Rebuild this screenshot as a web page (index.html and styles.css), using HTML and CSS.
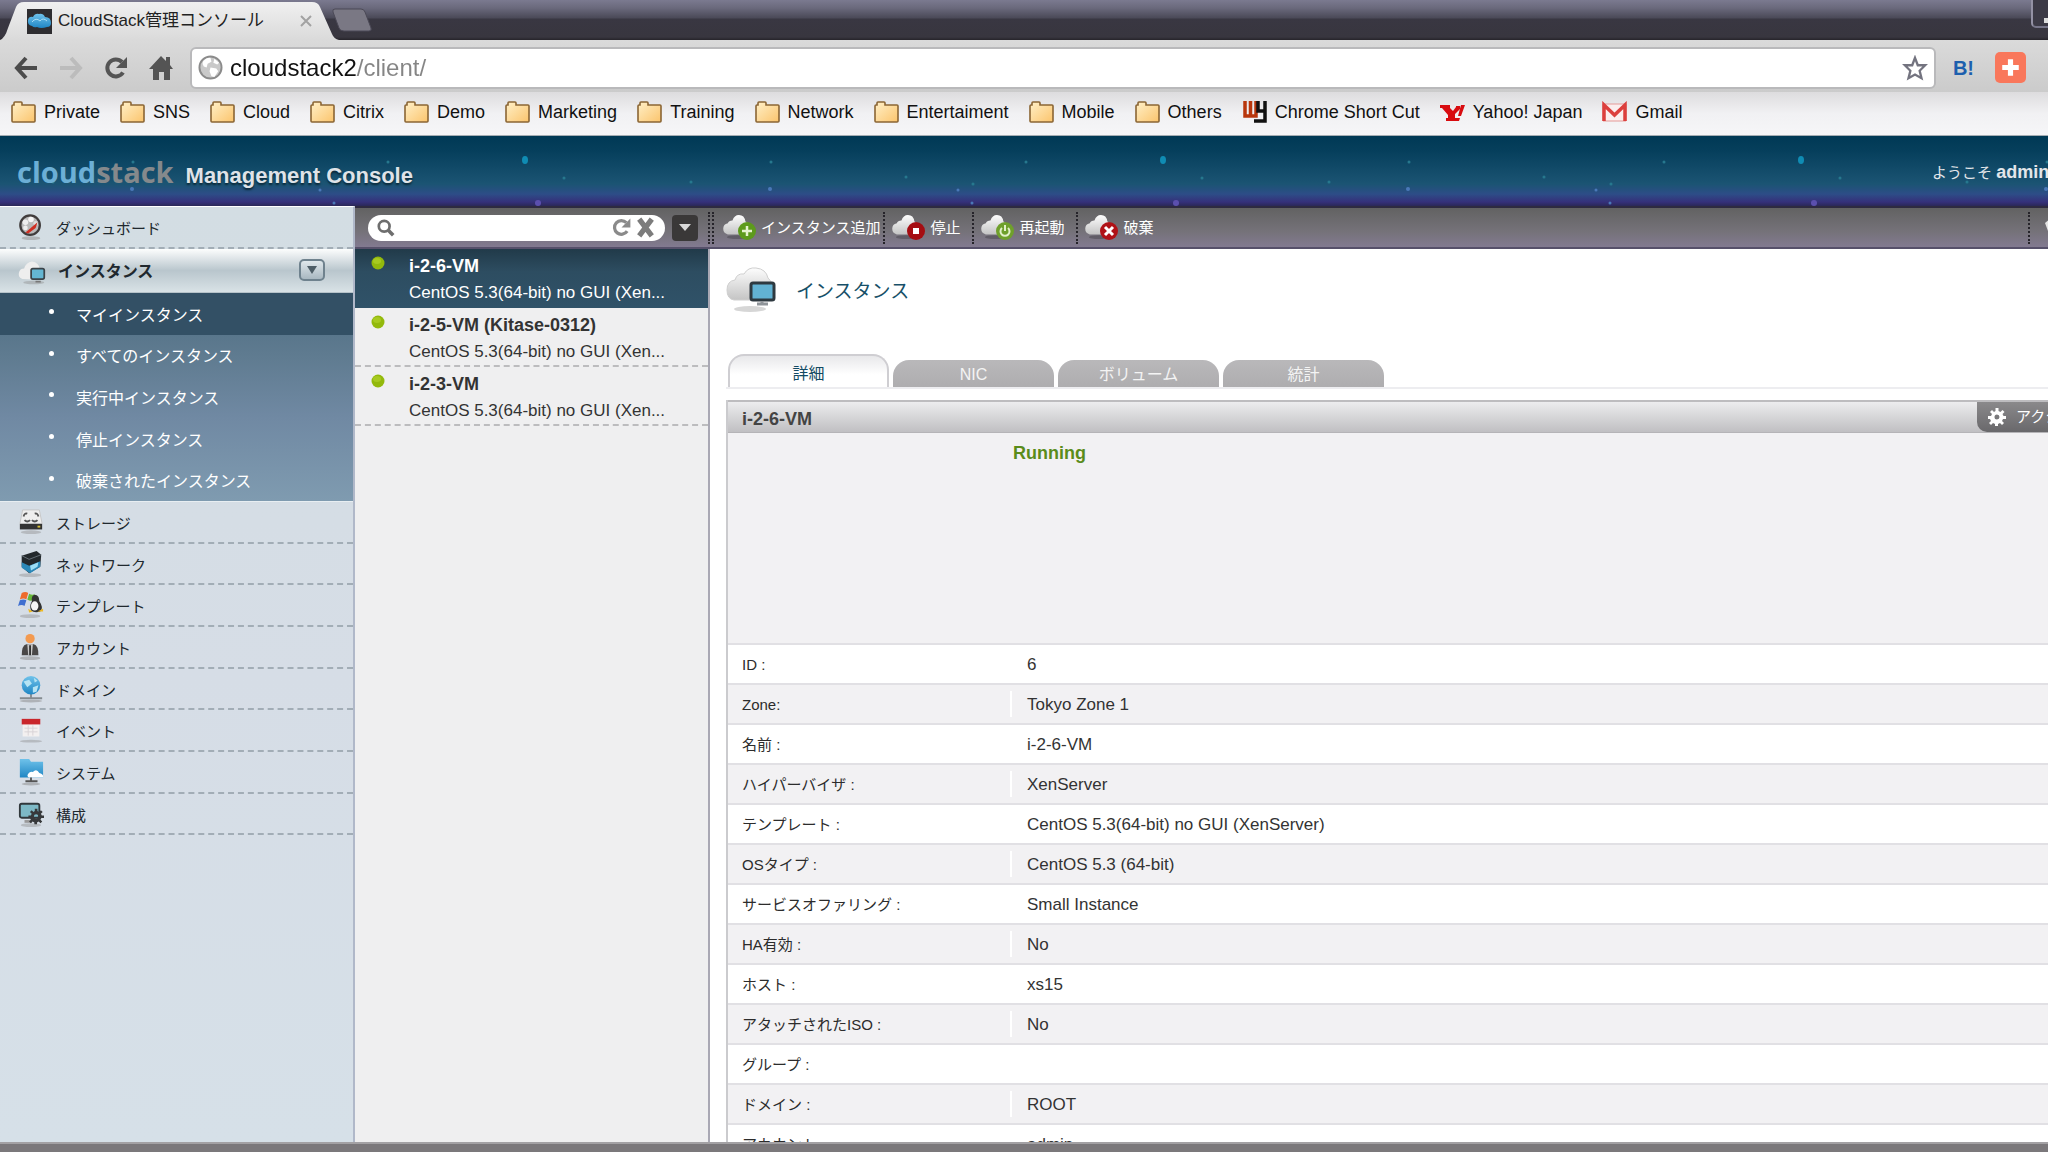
FILE: index.html
```html
<!DOCTYPE html>
<html lang="ja">
<head>
<meta charset="utf-8">
<title>CloudStack管理コンソール</title>
<link rel="stylesheet" href="styles.css">
</head>
<body>
<svg class="defs" aria-hidden="true">
  <defs>
    <linearGradient id="g-folder" x1="0" y1="0" x2="1" y2="1"><stop offset="0" stop-color="#fff0c8"/><stop offset="1" stop-color="#fbc46c"/></linearGradient>
    <linearGradient id="g-cloud" x1="0" y1="0" x2="0" y2="1"><stop offset="0" stop-color="#fdfdfd"/><stop offset="1" stop-color="#c4c4c4"/></linearGradient>
    <linearGradient id="g-blue" x1="0" y1="0" x2="0" y2="1"><stop offset="0" stop-color="#6fc2ea"/><stop offset="1" stop-color="#1f86c4"/></linearGradient>
    <linearGradient id="g-tab" x1="0" y1="0" x2="0" y2="1"><stop offset="0" stop-color="#f0f0f0"/><stop offset="1" stop-color="#dadada"/></linearGradient>
    <symbol id="i-folder" viewBox="0 0 25 22"><path d="M3 4V2q0-1 1-1h6q1 0 1 1v2h12q1 0 1 1v15q0 1-1 1H2q-1 0-1-1V5q0-1 1-1z" fill="url(#g-folder)" stroke="#8a6534" stroke-width="1.6"/></symbol>
    <symbol id="i-cloud" viewBox="0 0 32 26"><ellipse cx="15" cy="24" rx="11" ry="2" fill="#000" opacity=".2"/><path d="M5 21q-5-1-5-6t5-6q1-3 5-3 2-6 7-6 6 0 7 7 5 2 5 7 0 6-6 7z" fill="url(#g-cloud)"/></symbol>
    <symbol id="i-dot" viewBox="0 0 14 14"><circle cx="7" cy="7" r="6.500" fill="#93b90c"/><ellipse cx="6" cy="5" rx="4" ry="3" fill="#b4d52f" opacity=".6"/></symbol>
    <symbol id="i-gear" viewBox="0 0 18 18"><path d="M7.500 0h3v3l2 1 2-2 2 2-2 2 1 2H18v3h-3l-1 2 2 2-2 2-2-2-2 1v3h-3v-3l-2-1-2 2-2-2 2-2-1-2H0v-3h3l1-2-2-2 2-2 2 2 1.500-1zM9 6.500a2.500 2.500 0 1 0 0 5 2.500 2.500 0 0 0 0-5z" fill="currentColor" fill-rule="evenodd"/></symbol>
    <symbol id="i-reload" viewBox="0 0 26 26"><path d="M20 17.500A8.500 8.500 0 1 1 19 7" fill="none" stroke="currentColor" stroke-width="4"/><path d="M24 2v11H13z" fill="currentColor"/></symbol>
  </defs>
</svg>

<header class="browser">
  <div class="tabstrip">
    <div class="tab">
      <svg class="tab-shape" viewBox="0 0 340 40" preserveAspectRatio="none" aria-hidden="true"><path d="M0 40Q5 38 8 28L16 7Q18 2 24 2H312Q318 2 320 7L332 34Q334 39 339 40z" fill="url(#g-tab)"/></svg>
      <svg class="favicon" viewBox="0 0 25 25" aria-hidden="true"><path d="M0 0h25v25H0z" fill="#2e2d30"/><path d="M5 17Q0 16 1 11 2 7 6 8q2-4 6-3 4-1 6 3 6 0 6 6 0 4-4 4-6 2-10 0-3 1-5-1z" fill="url(#g-blue)"/><path d="M5 13q4-5 8-1 3-4 7 0" fill="none" stroke="#a9def5" stroke-width="1"/></svg>
      <span class="tab-title">CloudStack管理コンソール</span>
      <button class="tab-close" aria-label="閉じる"><svg viewBox="0 0 12 12"><path d="M1 1l10 10M11 1L1 11" stroke="#a2a2a2" stroke-width="2"/></svg></button>
    </div>
    <button class="new-tab" aria-label="新しいタブ"><svg viewBox="0 0 40 24"><path d="M3 1h26q3 0 4 3l6 16q1 3-2 3H12q-4 0-5-3L1 4q-1-3 2-3z" fill="#7a7884" stroke="#4b4956"/></svg></button>
    <button class="win-min" aria-label="最小化"><span></span></button>
  </div>

  <div class="navbar">
    <button class="nav-btn" aria-label="戻る"><svg viewBox="0 0 26 26"><path d="M24 13H5M13 3L4 13l9 10" fill="none" stroke="#4c4c4c" stroke-width="4"/></svg></button>
    <button class="nav-btn" aria-label="進む"><svg viewBox="0 0 26 26"><path d="M2 13h19M13 3l9 10-9 10" fill="none" stroke="#bcbcbc" stroke-width="4"/></svg></button>
    <button class="nav-btn" aria-label="再読み込み"><svg><use href="#i-reload"/></svg></button>
    <button class="nav-btn" aria-label="ホーム"><svg viewBox="0 0 26 26"><path d="M13 1l5 5V2h4v8l3 4h-3v11h-6v-8h-5v8H5V14H1z" fill="#545454"/></svg></button>
    <div class="omnibox">
      <svg class="globe" viewBox="0 0 26 26" aria-hidden="true"><circle cx="13" cy="13" r="11.500" fill="#c9c9c9" stroke="#8b8b8b" stroke-width="2"/><path d="M5 7q4-5 8-4l1 4-4 2-1 4-3-1q-2-2-1-5zM13 13l6 1 2 3-4 6-3-1-2-5zM17 4l5 4-2 2-4-2z" fill="#fff"/></svg>
      <input class="url" type="text" aria-label="アドレス" value="cloudstack2/client/">
      <button class="nav-btn" aria-label="ブックマーク"><svg viewBox="0 0 28 28"><path d="M14 3l3 8h8l-6 6 2 8-7-4-7 4 2-8-6-6h8z" fill="#fff" stroke="#73737f" stroke-width="2.500"/></svg></button>
    </div>
    <button class="ext-b" aria-label="はてなブックマーク">B!</button>
    <button class="ext-plus" aria-label="追加"><svg viewBox="0 0 30 30"><path d="M15 7v16M7 15h16" stroke="#fff" stroke-width="5"/></svg></button>
  </div>

  <nav class="bookmarks">
    <a href="#"><svg><use href="#i-folder"/></svg>Private</a>
    <a href="#"><svg><use href="#i-folder"/></svg>SNS</a>
    <a href="#"><svg><use href="#i-folder"/></svg>Cloud</a>
    <a href="#"><svg><use href="#i-folder"/></svg>Citrix</a>
    <a href="#"><svg><use href="#i-folder"/></svg>Demo</a>
    <a href="#"><svg><use href="#i-folder"/></svg>Marketing</a>
    <a href="#"><svg><use href="#i-folder"/></svg>Training</a>
    <a href="#"><svg><use href="#i-folder"/></svg>Network</a>
    <a href="#"><svg><use href="#i-folder"/></svg>Entertaiment</a>
    <a href="#"><svg><use href="#i-folder"/></svg>Mobile</a>
    <a href="#"><svg><use href="#i-folder"/></svg>Others</a>
    <a href="#"><svg viewBox="0 0 25 22"><path d="M3 0v15h11V0M8.500 0v15" fill="none" stroke="#b8360c" stroke-width="3.500"/><path d="M16 0v10h7M23 0v20H12" fill="none" stroke="#111" stroke-width="3.500"/></svg>Chrome Short Cut</a>
    <a href="#"><svg viewBox="0 0 25 22"><path d="M0 4h10v3l3 3 3-4V5h4v3l-5 5v4h2v3H6v-3h2v-3L2 7H0z" fill="#d80c10"/><path d="M21 4h4l-4 11h-3zM16 17h4l-1 3h-4z" fill="#d80c10"/></svg>Yahoo! Japan</a>
    <a href="#"><svg viewBox="0 0 25 22"><path d="M1 3h23v17H1z" fill="#fbeeee" stroke="#e59a98"/><path d="M2 20V4l10.500 10L23 4v16" fill="none" stroke="#dc3f3d" stroke-width="3.500"/></svg>Gmail</a>
  </nav>
</header>

<div class="banner">
  <svg class="stars" aria-hidden="true">
    <defs><pattern id="star-tile" width="638" height="70" patternUnits="userSpaceOnUse">
      <ellipse cx="525" cy="24" rx="3" ry="4" fill="#0f8cb4"/><circle cx="538" cy="67" r="3" fill="#5b4fae"/>
      <g fill="#26788e"><circle cx="564" cy="42" r="1.500"/><circle cx="53" cy="46" r="1.500"/><circle cx="133" cy="26" r="1.500"/><circle cx="268" cy="41" r="1.500"/><circle cx="335" cy="48" r="1.500"/><circle cx="388" cy="26" r="1.500"/></g>
      <g fill="#4a78b8"><circle cx="132" cy="53" r="2"/><circle cx="320" cy="54" r="1.500"/><circle cx="334" cy="67" r="1.500"/></g>
    </pattern></defs>
    <rect width="100%" height="70" fill="url(#star-tile)"/>
  </svg>
  <h1 class="logo"><span class="logo-cloud">cloud</span><span class="logo-stack">stack</span></h1>
  <span class="product">Management Console</span>
  <span class="welcome">ようこそ <b>admin</b></span>
</div>

<div class="app">
  <nav class="sidebar">
    <a class="item first" href="#"><svg viewBox="0 0 28 28"><ellipse cx="14" cy="26" rx="10" ry="2" fill="#999" opacity=".6"/><circle cx="13" cy="12" r="10.500" fill="#b9b9b9" stroke="#403c3c" stroke-width="2.500"/><circle cx="8" cy="9" r="3" fill="#eee"/><circle cx="14" cy="6" r="3" fill="#f6f6f6"/><circle cx="19" cy="10" r="2.500" fill="#ddd"/><circle cx="8" cy="15" r="2.500" fill="#eee"/><path d="M8 20L21 9l-2 6-8 6z" fill="#cf2f22"/></svg>ダッシュボード</a>
    <div class="item current">
      <svg viewBox="0 0 32 28"><ellipse cx="18" cy="26" rx="12" ry="2" fill="#888" opacity=".4"/><path d="M5 22q-5-2-4-7t6-5Q9 3 16 2q8 1 9 9 4 3 3 8l-3 4z" fill="#eee"/><rect x="15" y="10" width="15" height="12" rx="2" fill="#64b6d2" stroke="#3b4348" stroke-width="2"/><path d="M20 25h6" stroke="#777" stroke-width="2"/></svg>
      <a href="#">インスタンス</a>
      <button class="collapse" aria-label="開閉"><svg viewBox="0 0 10 8"><path d="M0 0h10L5 8z" fill="#4d5d66"/></svg></button>
    </div>
    <ul class="submenu">
      <li class="on"><a href="#">マイインスタンス</a></li>
      <li><a href="#">すべてのインスタンス</a></li>
      <li><a href="#">実行中インスタンス</a></li>
      <li><a href="#">停止インスタンス</a></li>
      <li><a href="#">破棄されたインスタンス</a></li>
    </ul>
    <a class="item" href="#"><svg viewBox="0 0 28 28"><ellipse cx="14" cy="25" rx="11" ry="2" fill="#888" opacity=".4"/><path d="M5 1h18l3 15H2z" fill="#eee" stroke="#c6c6c6"/><path d="M6 8q1-4 4-3M22 8q-1-4-4-3M7 12q3 3 6 0M15 12q3 3 6 0" fill="none" stroke="#555" stroke-width="2"/><path d="M2 16h24v6H2z" fill="#333"/><path d="M21 18h3v2h-3z" fill="#d8c23a"/></svg>ストレージ</a>
    <a class="item" href="#"><svg viewBox="0 0 28 28"><ellipse cx="13" cy="26" rx="12" ry="2" fill="#888" opacity=".4"/><path d="M4 5l16-5 5 4-1 13-12 7-8-7z" fill="#23282c"/><path d="M4 12l8 4 12-5v6l-11 7-9-6z" fill="#2b88b8"/><path d="M13 16l9-4-1 5-7 4z" fill="#9cdcf5"/><path d="M4 5l8 4 13-5" fill="none" stroke="#68737a"/></svg>ネットワーク</a>
    <a class="item" href="#"><svg viewBox="0 0 28 28"><ellipse cx="13" cy="26" rx="11" ry="2" fill="#888" opacity=".4"/><path d="M4 1q4-2 7 0L9 8Q6 6 2 8z" fill="#ee6a2c"/><path d="M12 2q4 2 6 0l-2 7q-3 1-6-1z" fill="#67b63a"/><path d="M2 9q4-2 7 0l-2 6Q4 13 0 15z" fill="#3f6fd0"/><path d="M18 3q5 0 5 7 5 7 1 11-6 2-10-1-2-5 1-10-1-6 3-7z" fill="#333"/><ellipse cx="18" cy="15" rx="4" ry="5" fill="#f6f6f6"/><path d="M11 18l5 3-4 1zM21 21l6-3v3z" fill="#efb91e"/></svg>テンプレート</a>
    <a class="item" href="#"><svg viewBox="0 0 28 28"><ellipse cx="13" cy="26" rx="11" ry="2" fill="#888" opacity=".5"/><circle cx="13" cy="5" r="5" fill="#f39a50"/><path d="M4 23q0-11 5-12h8q5 1 5 12z" fill="#494747"/><path d="M10 11h6l-1 12h-4z" fill="#c9c9c9"/><path d="M13 12v11" stroke="#333" stroke-width="2"/></svg>アカウント</a>
    <a class="item" href="#"><svg viewBox="0 0 28 28"><ellipse cx="14" cy="27" rx="12" ry="1.500" fill="#888" opacity=".5"/><path d="M14 18v6M2 24h24" stroke="#848b90" stroke-width="2"/><circle cx="14" cy="10" r="10" fill="url(#g-blue)"/><path d="M6 6l6-2 3 4-5 4zM16 12l6-2-2 7-4 1zM17 2l4 3-3 2z" fill="#b6e4f4"/></svg>ドメイン</a>
    <a class="item" href="#"><svg viewBox="0 0 28 28"><ellipse cx="14" cy="26" rx="12" ry="1.500" fill="#888" opacity=".4"/><path d="M5 4h18v17H5z" fill="#f3f0f0"/><path d="M4 2h20v6H4z" fill="#c9262b"/><path d="M7 12h14M7 16h14M11 9v11M16 9v11" stroke="#d7d3d6"/></svg>イベント</a>
    <a class="item" href="#"><svg viewBox="0 0 28 28"><ellipse cx="14" cy="27" rx="10" ry="1.500" fill="#888" opacity=".5"/><path d="M2 0h10l2 3h13v17H2z" fill="url(#g-blue)"/><path d="M12 20q-3-1-1-4t5-2q4-4 7 1 5 1 4 5z" fill="#fff"/><path d="M14 20v4M8 24h13" stroke="#555" stroke-width="2"/></svg>システム</a>
    <a class="item" href="#"><svg viewBox="0 0 28 28"><ellipse cx="14" cy="26" rx="11" ry="2" fill="#888" opacity=".4"/><rect x="2" y="3" width="21" height="15" rx="2" fill="#7db9c6" stroke="#31383c" stroke-width="2"/><path d="M7 22h8" stroke="#999" stroke-width="3"/><g color="#37393b"><use href="#i-gear" x="11" y="8" width="17" height="17"/></g></svg>構成</a>
  </nav>

  <div class="workspace">
    <div class="toolbar">
      <div class="search">
        <label class="search-box"><svg class="lens" viewBox="0 0 20 20" aria-hidden="true"><circle cx="8" cy="8" r="6" fill="none" stroke="#6e6e6e" stroke-width="3"/><path d="M12 12l6 6" stroke="#6e6e6e" stroke-width="4"/></svg><input type="text" aria-label="検索"><button aria-label="更新"><svg><use href="#i-reload"/></svg></button><button aria-label="クリア"><svg viewBox="0 0 18 20"><path d="M3 2l12 16M15 2L3 18" stroke="#7c7c7c" stroke-width="5"/></svg></button></label>
        <button class="search-more" aria-label="詳細検索"><svg viewBox="0 0 12 8"><path d="M0 0h12L6 7z" fill="#d8d8d8"/></svg></button>
      </div>
      <button class="tool lead"><svg viewBox="0 0 34 28"><use href="#i-cloud" width="30" height="24" y="1"/><circle cx="24" cy="17" r="9" fill="#5d9a1c"/><path d="M24 12v10M19 17h10" stroke="#e6f3cf" stroke-width="2.500"/></svg>インスタンス追加</button>
      <button class="tool"><svg viewBox="0 0 34 28"><use href="#i-cloud" width="30" height="24" y="1"/><circle cx="24" cy="17" r="9" fill="#a50d12"/><path d="M21 14h6v6h-6z" fill="#fff"/></svg>停止</button>
      <button class="tool"><svg viewBox="0 0 34 28"><use href="#i-cloud" width="30" height="24" y="1"/><circle cx="24" cy="17" r="9" fill="#6fa02b"/><path d="M21 14a4.500 4.500 0 1 0 6 0M24 11v6" fill="none" stroke="#e2f0c8" stroke-width="2"/></svg>再起動</button>
      <button class="tool"><svg viewBox="0 0 34 28"><use href="#i-cloud" width="30" height="24" y="1"/><circle cx="24" cy="17" r="9" fill="#b01217"/><path d="M20 13l8 8M28 13l-8 8" stroke="#fff" stroke-width="3"/></svg>破棄</button>
      <button class="tool last" aria-label="ヘルプ"><svg viewBox="0 0 34 28"><path d="M3 9l7-6v14H6z" fill="#e4e4e4"/></svg></button>
    </div>

    <div class="panes">
      <ul class="vms">
        <li class="on"><a href="#"><svg><use href="#i-dot"/></svg><b>i-2-6-VM</b><span>CentOS 5.3(64-bit) no GUI (Xen...</span></a></li>
        <li><a href="#"><svg><use href="#i-dot"/></svg><b>i-2-5-VM (Kitase-0312)</b><span>CentOS 5.3(64-bit) no GUI (Xen...</span></a></li>
        <li><a href="#"><svg><use href="#i-dot"/></svg><b>i-2-3-VM</b><span>CentOS 5.3(64-bit) no GUI (Xen...</span></a></li>
      </ul>

      <main class="detail">
        <div class="heading">
          <svg viewBox="0 0 50 46" aria-hidden="true"><ellipse cx="24" cy="42" rx="16" ry="3" fill="#999" opacity=".4"/><path d="M8 33Q1 32 1 23t8-10Q11 6 18 7 22 0 30 1q10 1 12 10 6 5 4 15-2 7-8 7z" fill="url(#g-cloud)" stroke="#cfcfcf"/><rect x="25" y="16" width="23" height="17" rx="2" fill="#62b2d3" stroke="#2e3940" stroke-width="3"/><path d="M36 34v3M31 37h11" stroke="#8f9499" stroke-width="3"/></svg>
          <h2>インスタンス</h2>
        </div>
        <div class="tabs">
          <button class="on">詳細</button><button>NIC</button><button>ボリューム</button><button>統計</button>
        </div>
        <section class="panel">
          <div class="panel-head">
            <h3>i-2-6-VM</h3>
            <button class="actions"><svg><use href="#i-gear"/></svg>アクション</button>
          </div>
          <p class="state">Running</p>
          <table>
            <tr><th scope="row">ID :</th><td>6</td></tr>
            <tr><th scope="row">Zone:</th><td>Tokyo Zone 1</td></tr>
            <tr><th scope="row">名前 :</th><td>i-2-6-VM</td></tr>
            <tr><th scope="row">ハイパーバイザ :</th><td>XenServer</td></tr>
            <tr><th scope="row">テンプレート :</th><td>CentOS 5.3(64-bit) no GUI (XenServer)</td></tr>
            <tr><th scope="row">OSタイプ :</th><td>CentOS 5.3 (64-bit)</td></tr>
            <tr><th scope="row">サービスオファリング :</th><td>Small Instance</td></tr>
            <tr><th scope="row">HA有効 :</th><td>No</td></tr>
            <tr><th scope="row">ホスト :</th><td>xs15</td></tr>
            <tr><th scope="row">アタッチされたISO :</th><td>No</td></tr>
            <tr><th scope="row">グループ :</th><td></td></tr>
            <tr><th scope="row">ドメイン :</th><td>ROOT</td></tr>
            <tr><th scope="row">アカウント :</th><td>admin</td></tr>
          </table>
        </section>
      </main>
    </div>
  </div>
</div>
<footer class="frame"></footer>
</body>
</html>
```
FILE: styles.css
```css
* { box-sizing: border-box; }

body {
  margin: 0;
  height: 100vh;
  overflow: hidden;
  display: flex;
  flex-direction: column;
  font: 17px/20px "Liberation Sans", "Noto Sans CJK JP", sans-serif;
  color: #333;
  background: #fff;
}

h1, h2, h3, p, ul { margin: 0; padding: 0; }
ul { list-style: none; }
a { color: inherit; text-decoration: none; }
svg { display: block; flex: none; }
button {
  margin: 0;
  padding: 0;
  border: 0;
  background: none;
  font: inherit;
  color: inherit;
  flex: none;
}
input {
  border: 0;
  padding: 0;
  outline: 0;
  background: none;
  font: inherit;
  min-width: 0;
}
.defs { position: absolute; width: 0; height: 0; }

/* Browser chrome */
.browser { flex: none; border-bottom: 1px solid #a5adb3; }
.tabstrip {
  display: flex;
  height: 40px;
  background: linear-gradient(#7b7a90, #6a697c 8px, #4a4957 18px, #393742 19px, #38363f 37px, #26242a);
}
.tab {
  position: relative;
  display: flex;
  align-items: center;
  width: 332px;
  padding: 2px 20px 0 27px;
  color: #222;
}
.tab-shape { position: absolute; inset: 0; width: 340px; height: 40px; }
.favicon { position: relative; width: 25px; height: 25px; }
.tab-title { position: relative; flex: 1; padding-left: 6px; white-space: nowrap; }
.tab-close { position: relative; }
.tab-close svg { width: 12px; height: 12px; }
.new-tab { align-self: center; }
.new-tab svg { width: 40px; height: 24px; }
.win-min {
  width: 17px;
  height: 28px;
  margin-left: auto;
  padding: 14px 0 0 11px;
  border-left: 2px solid #9391a4;
  border-bottom: 2px solid #77768a;
  border-bottom-left-radius: 5px;
  background: #3c3a46;
}
.win-min span { display: block; height: 5px; background: #ddd; }

.navbar {
  display: flex;
  align-items: center;
  height: 52px;
  gap: 19px;
  padding: 3px 22px 0 13px;
  background: linear-gradient(#dadada, #cbcbcb);
  color: #555;
}
.nav-btn svg { width: 26px; height: 26px; }
.omnibox {
  flex: 1;
  display: flex;
  align-items: center;
  height: 42px;
  margin: 0 2px 0 -3px;
  padding: 0 6px;
  gap: 7px;
  border: 2px solid #b9b9bb;
  border-radius: 6px;
  background: #fff;
}
.globe { width: 25px; height: 25px; }
.url {
  flex: 1;
  font-size: 24px;
  line-height: 30px;
  color: transparent;
  background: linear-gradient(90deg, #111 127px, #858585 127px);
  -webkit-background-clip: text;
  background-clip: text;
}
.ext-b { margin-left: -4px; font-size: 20px; font-weight: bold; color: #1d5fae; }
.ext-plus { margin-left: 2px; border-radius: 5px; background: #f9775b; }
.ext-plus svg { width: 31px; height: 31px; }

.bookmarks {
  display: flex;
  gap: 20px;
  height: 43px;
  padding: 0 11px 3px;
  align-items: center;
  font-size: 18px;
  color: #111;
  background: linear-gradient(#dddcde, #f1f1f3 50%, #f6f6f8);
}
.bookmarks a { display: flex; align-items: center; gap: 8px; white-space: nowrap; }
.bookmarks svg { width: 25px; height: 22px; }

/* Product banner */
.banner {
  flex: none;
  position: relative;
  display: flex;
  align-items: center;
  height: 70px;
  padding: 2px 0 0 17px;
  overflow: hidden;
  background: linear-gradient(#003955, #063f5c 15px, #1b5473 48px, #2d4d87 58px, #35307a 66px, #2b2857);
  color: #e3e6ea;
}
.stars { position: absolute; inset: 0; width: 100%; height: 70px; }
.logo, .product, .welcome { position: relative; white-space: nowrap; }
.logo { font: 700 29px/40px "Open Sans", sans-serif; }
.logo-cloud { color: #6cafd6; }
.logo-stack { color: #85898c; }
.product {
  margin: 8px 0 0 12px;
  font-size: 22px;
  line-height: 30px;
  font-weight: bold;
  color: #dfe3e8;
  text-shadow: 0 2px 2px #0b2838;
}
.welcome { width: 116px; margin-left: auto; font-size: 15px; }
.welcome b { font-size: 18px; }

/* Application */
.app { flex: 1; min-height: 0; display: flex; }

.sidebar {
  flex: none;
  width: 355px;
  overflow: hidden;
  border-top: 1px solid #fff;
  border-right: 2px solid #b0b8c9;
  background: linear-gradient(#d3dde3, #d6dde6 50%, #d6e0e8);
  font-size: 15px;
  color: #20282e;
}
.item {
  display: flex;
  align-items: center;
  gap: 12px;
  height: 42px;
  padding: 4px 0 0 18px;
  border-bottom: 2px dashed #a2adb6;
  white-space: nowrap;
}
.item:nth-of-type(3n) { height: 41px; }
.item svg { width: 26px; height: 28px; margin-bottom: 4px; }
.item.current {
  height: 44px;
  padding: 2px 28px 0 18px;
  border-bottom: 1px solid #b6c2c9;
  background: linear-gradient(#fcfdfd, #b9c6cd 50%, #d9e2e6);
  font-size: 16px;
  font-weight: bold;
}
.item.current a { flex: 1; }
.item.current svg { width: 28px; margin: 0; }
.collapse {
  display: grid;
  place-items: center;
  width: 26px;
  height: 22px;
  margin-bottom: 4px;
  border: 2px solid #6f828e;
  border-radius: 5px;
  background: linear-gradient(#dfe7eb, #a9b8c1);
}
.item.current .collapse svg { width: 10px; height: 8px; }

.submenu {
  display: grid;
  grid-auto-rows: 1fr;
  height: 209px;
  background: linear-gradient(#4d6c82, #5f7b90 30%, #7089a3 60%, #7f9bb0);
  border-bottom: 1px solid #e8eef2;
  font-size: 16px;
  color: #fff;
}
.submenu li { display: flex; align-items: center; gap: 22px; padding: 4px 0 0 49px; }
.submenu li::before {
  content: "";
  width: 5px;
  height: 5px;
  margin-bottom: 8px;
  border-radius: 50%;
  background: #fff;
}
.submenu .on { background: #335065; }

.workspace { flex: 1; min-width: 0; display: flex; flex-direction: column; }
.toolbar {
  flex: none;
  display: flex;
  align-items: center;
  height: 43px;
  border-top: 2px solid #2e2a40;
  border-bottom: 2px solid #56506a;
  background: linear-gradient(#626262, #757279 60%, #827a90);
  color: #fff;
  font-size: 15px;
  overflow: hidden;
}
.search {
  display: flex;
  align-items: center;
  gap: 7px;
  width: 355px;
  height: 32px;
  padding-left: 13px;
  border-right: 2px dotted #26242a;
}
.search-box {
  display: flex;
  align-items: center;
  gap: 3px;
  width: 297px;
  height: 26px;
  padding: 0 9px;
  border-radius: 13px;
  background: #fff;
  color: #8a8a8a;
}
.search-box input { flex: 1; }
.lens { width: 18px; height: 18px; }
.search-box button svg { width: 21px; height: 21px; }
.search-more {
  display: grid;
  place-items: center;
  width: 26px;
  height: 26px;
  border-radius: 4px;
  background: #3a3838;
}
.search-more svg { width: 12px; height: 8px; }
.tool {
  display: flex;
  align-items: center;
  gap: 4px;
  height: 32px;
  padding: 0 12px 0 7px;
  border-left: 2px dotted #26242a;
}
.tool.lead { margin-left: 2px; padding: 0 3px 0 9px; }
.tool svg { width: 34px; height: 28px; }
.tool.last { margin-left: auto; width: 20px; padding: 0 0 0 12px; overflow: hidden; }

.panes { flex: 1; min-height: 0; display: flex; }
.vms {
  flex: none;
  width: 355px;
  border-right: 2px solid #a9a8b4;
  background: #efeff0;
}
.vms li { height: 59px; border-bottom: 2px dashed #bcbcbe; }
.vms a {
  display: grid;
  grid-template-columns: 38px 1fr;
  row-gap: 7px;
  padding: 7px 0 0 16px;
  white-space: nowrap;
}
.vms svg { width: 14px; height: 14px; }
.vms b { font-size: 18px; }
.vms span { grid-column: 2; }
.vms .on {
  border-bottom: 2px solid #305268;
  background: linear-gradient(#213a49, #2d4d61 40%, #305268);
  color: #fff;
}

.detail { flex: 1; min-width: 0; padding: 18px 0 0 16px; overflow: hidden; }
.heading { display: flex; gap: 20px; height: 87px; }
.heading svg { width: 50px; height: 46px; }
.heading h2 { font-size: 19px; line-height: 50px; font-weight: normal; color: #175068; }

.tabs {
  display: flex;
  align-items: flex-end;
  gap: 4px;
  height: 35px;
  padding-left: 2px;
  border-bottom: 2px solid #ededf0;
}
.tabs button {
  width: 161px;
  height: 27px;
  padding-top: 2px;
  border-radius: 16px 16px 0 0;
  background: linear-gradient(#b9b8ba, #aeadaf);
  font-size: 16px;
  color: #f4f4f4;
}
.tabs .on {
  height: 33px;
  padding-top: 4px;
  border: 2px solid #cfced2;
  border-bottom: 0;
  background: linear-gradient(#e8e8ea, #fff 60%);
  color: #124a63;
}

.panel { margin-top: 11px; border-left: 2px solid #cbcbce; background: #f2f1f3; }
.panel-head {
  display: flex;
  align-items: center;
  height: 33px;
  padding-left: 14px;
  border-top: 2px solid #bdbcbf;
  border-bottom: 1px solid #b5b4b7;
  background: linear-gradient(#ececee, #c0bfc2);
}
.panel-head h3 { padding-top: 4px; font-size: 18px; color: #444; }
.actions {
  display: flex;
  align-items: center;
  gap: 10px;
  align-self: stretch;
  width: 71px;
  margin-left: auto;
  padding-left: 11px;
  overflow: hidden;
  border-bottom-left-radius: 10px;
  background: linear-gradient(#8a898b, #69686b);
  color: #fff;
  font-size: 15px;
  white-space: nowrap;
}
.actions svg { width: 18px; height: 18px; }
.state {
  height: 210px;
  padding: 10px 0 0 285px;
  font-size: 18px;
  font-weight: bold;
  color: #5a8c1a;
}

table { width: 100%; border-collapse: separate; border-spacing: 0; table-layout: fixed; }
tr { background: #fff; }
tr:nth-child(even) { background: #f2f1f3; }
th, td {
  height: 40px;
  padding: 2px 0 0 14px;
  border-top: 2px solid #e1e0e4;
  text-align: left;
  vertical-align: middle;
  white-space: nowrap;
}
th { width: 282px; font-size: 15px; font-weight: normal; color: #2c2c2c; }
td { padding-left: 17px; background: linear-gradient(#fff, #fff) 0 center / 2px 26px no-repeat; }

.frame { flex: none; height: 10px; border-top: 2px solid #a3a1a4; background: #7b787b; }
```
